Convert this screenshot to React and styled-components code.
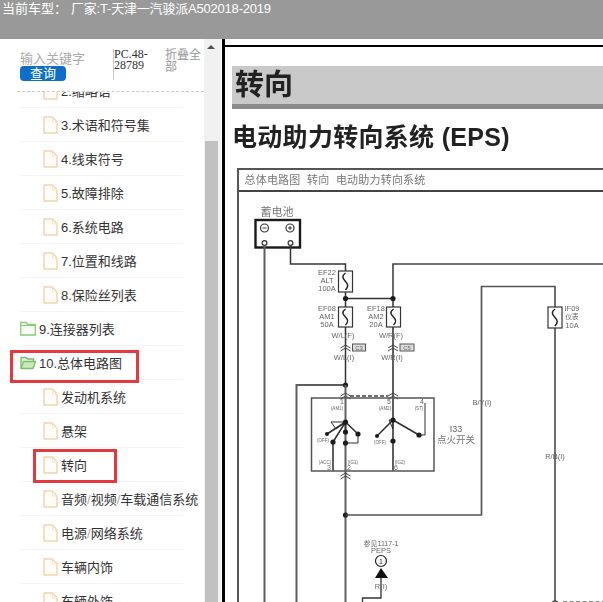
import React from "react";
import styled, { createGlobalStyle } from "styled-components";

const Global = createGlobalStyle`
  html, body { margin: 0; padding: 0; height: 100%; overflow: hidden; background: #fff; }
  #root { height: 100%; }
`;

const CJK = `"Liberation Sans", "Noto Sans CJK SC", sans-serif`;

const Page = styled.div`
  width: 603px;
  height: 602px;
  display: flex;
  flex-direction: column;
  overflow: hidden;
  font-family: ${CJK};
`;

const TopBar = styled.header`
  height: 39px;
  box-sizing: border-box;
  flex: none;
  background: #999;
  color: #fff;
  font-size: 13px;
  line-height: 15px;
  padding: 1px 2px 0;
  display: flex;
  white-space: pre;
`;

const CarModel = styled.span`
  margin-left: 4px;
  letter-spacing: -0.2px;
`;

const Body = styled.div`
  flex: 1;
  min-height: 0;
  display: flex;
`;

const Sidebar = styled.aside`
  width: 222px;
  flex: none;
  display: flex;
  background: #fff;
`;

const TreePane = styled.div`
  width: 204px;
  flex: none;
  display: flex;
  flex-direction: column;
  min-height: 0;
`;

const SearchHead = styled.div`
  height: 53px;
  box-sizing: border-box;
  flex: none;
  margin-left: 17px;
  padding: 10px 0 0 3px;
  border-bottom: 1px dashed #ccc;
  display: flex;
  align-items: flex-start;
  position: relative;
  z-index: 1;
  background: #fff;
`;

const SearchBox = styled.div`
  width: 93px;
  flex: none;
  display: flex;
  flex-direction: column;
  padding-top: 3px;
`;

const Placeholder = styled.div`
  font-size: 13px;
  line-height: 14px;
  color: #aaa;
`;

const QueryButton = styled.button`
  width: 46px;
  height: 15px;
  padding: 0;
  border: 0;
  border-radius: 4px;
  background: #0d6fc7;
  color: #fff;
  font: 13px/15px ${CJK};
`;

const CodeBox = styled.div`
  width: 36px;
  height: 31px;
  flex: none;
  border-left: 1px solid #ccc;
  font: 12px/11px "Liberation Serif", serif;
  color: #333;
  overflow-wrap: break-word;
`;

const CollapseAll = styled.div`
  width: 36px;
  flex: none;
  margin-left: 15px;
  font-size: 12px;
  line-height: 12px;
  color: #999;
`;

const TreeViewport = styled.div`
  flex: 1;
  min-height: 0;
  overflow: hidden;
`;

const TreeList = styled.ul`
  list-style: none;
  margin: -18px 0 0;
  padding: 0;
`;

const Row = styled.li`
  position: relative;
  height: 34px;
  box-sizing: border-box;
  margin: 0 21px 0 20px;
  padding-left: ${(p) => (p.$nested ? 23 : 0)}px;
  border-bottom: 1px solid #f4f4f4;
  display: flex;
  align-items: center;
  font-size: 13px;
  color: #333;
  white-space: nowrap;
`;

const Label = styled.span`
  margin-left: 3px;
`;

const Slash = styled.span`
  color: #aaa;
`;

const RedBox = styled.span`
  position: absolute;
  top: ${(p) => p.$top}px;
  left: ${(p) => p.$left}px;
  width: ${(p) => p.$width}px;
  height: ${(p) => p.$height}px;
  box-sizing: border-box;
  border: 3px solid #e3393f;
  pointer-events: none;
`;

const ScrollTrack = styled.div`
  width: 17px;
  flex: none;
  background: #f1f1f1;
  display: flex;
  flex-direction: column;
  align-items: flex-start;
`;

const ScrollArrow = styled.span`
  width: 0;
  height: 0;
  margin: 6px 0 0 3px;
  border-left: 4px solid transparent;
  border-right: 4px solid transparent;
  border-bottom: 4px solid #505050;
`;

const ScrollThumb = styled.span`
  flex: 1;
  width: 13px;
  margin: 92px 0 0 1px;
  background: #c1c1c1;
`;

const ViewerPane = styled.main`
  flex: 1;
  min-width: 0;
  border-left: 3px solid #000;
  padding-top: 6px;
  overflow: hidden;
  background: #fff;
`;

const PageSheet = styled.article`
  height: 100%;
  box-sizing: border-box;
  border-top: 2px solid #000;
  padding: 19px 0 0 7px;
  overflow: hidden;
  filter: blur(0.35px);
`;

const SectionBand = styled.h1`
  margin: 0;
  height: 38px;
  background: #c9c9c9;
  border-bottom: 5px solid #8a8a8a;
  padding-left: 3px;
  font: bold 29px/39px ${CJK};
  color: #222;
`;

const PageTitle = styled.h2`
  margin: 12px 0 15px 0;
  font: bold 25px/32px ${CJK};
  letter-spacing: 0.3px;
  color: #222;
  white-space: nowrap;
`;

const Frame = styled.section`
  margin-left: 4.5px;
  width: 420px;
  border: 2px solid #555;
  border-right: 0;
  border-bottom: 0;
  background: #fff;
`;

const FrameHeader = styled.div`
  height: 20px;
  border-bottom: 2px solid #444;
  padding-left: 6px;
  font-size: 11px;
  line-height: 20px;
  color: #777;
  white-space: pre;
  letter-spacing: 0.2px;
`;

const Diagram = styled.svg`
  display: block;
  width: 364px;
  height: 411px;
`;

const FileIcon = () => (
  <svg width="15" height="18" viewBox="0 0 15 18" style={{ flex: "none" }}>
    <path d="M1 1h8.5L14 6v11H1z" fill="#fffdf9" stroke="#f4d5ae" strokeWidth="1.5" strokeLinejoin="round" />
    <path d="M9.5 1v5H14" fill="none" stroke="#f8e4cb" strokeWidth="1" />
  </svg>
);

const FolderIcon = ({ open }) => (
  <svg width="16" height="15" viewBox="0 0 16 15" style={{ flex: "none" }}>
    {open ? (
      <>
        <path d="M1 13.5V2.5h5l1.5 1.5h6v2.5" fill="#e5f3df" stroke="#79bf68" strokeWidth="1.3" />
        <path d="M1 13.5l2.5-7H15.5l-2.5 7z" fill="#c9e8bb" stroke="#79bf68" strokeWidth="1.3" strokeLinejoin="round" />
      </>
    ) : (
      <>
        <path d="M.7 14V1.5h5.5L8 3.5h7.3V14z" fill="#f7fcf4" stroke="#8acb7a" strokeWidth="1.3" />
        <path d="M.7 4.5h14.6" stroke="#8acb7a" strokeWidth="1" />
      </>
    )}
  </svg>
);

const rows = [
  { text: "2.缩略语", nested: true },
  { text: "3.术语和符号集", nested: true },
  { text: "4.线束符号", nested: true },
  { text: "5.故障排除", nested: true },
  { text: "6.系统电路", nested: true },
  { text: "7.位置和线路", nested: true },
  { text: "8.保险丝列表", nested: true },
  { text: "9.连接器列表", folder: "closed" },
  { text: "10.总体电路图", folder: "open", mark: { top: 4, left: -10, width: 129, height: 33 } },
  { text: "发动机系统", nested: true },
  { text: "悬架", nested: true },
  { text: "转向", nested: true, mark: { top: 1, left: 13, width: 84, height: 34 } },
  { text: "音频/视频/车载通信系统", nested: true },
  { text: "电源/网络系统", nested: true },
  { text: "车辆内饰", nested: true },
  { text: "车辆外饰", nested: true },
];

const withSlashes = (text) =>
  text.split("/").flatMap((part, i) => (i === 0 ? [part] : [<Slash key={i}>/</Slash>, part]));

const W = "#5e5e5e";
const INK = "#2e2e2e";

const Wire = ({ d, color = W, width = 2, dash }) => (
  <path d={d} fill="none" stroke={color} strokeWidth={width} strokeDasharray={dash} />
);

const Dot = ({ x, y, r = 2.6 }) => <circle cx={x} cy={y} r={r} fill="#1c1c1c" />;

const T = ({ x, y, size = 7.5, color = "#666", children }) => (
  <text x={x} y={y} fontSize={size} fill={color} textAnchor="middle" fontFamily={CJK}>
    {children}
  </text>
);

const Fuse = ({ x, y, w = 14, h = 20 }) => (
  <g>
    <rect x={x} y={y} width={w} height={h} fill="#fff" stroke="#333" strokeWidth="1.2" />
    <path
      d={`M${x + w / 2} ${y + 2}c-4 3-3 5 0 ${h / 2 - 2}c3 3 3 5 0 ${h / 2 - 2}`}
      fill="none"
      stroke="#222"
      strokeWidth="1.5"
    />
  </g>
);

const Chevron = ({ x, y }) => (
  <path d={`M${x - 5} ${y + 1}l5-3 5 3M${x - 5} ${y + 4}l5-3 5 3`} fill="none" stroke="#444" strokeWidth="1" />
);

const Circuit = () => (
  <Diagram viewBox="239 191 364 411">
    <T x={277} y={215} size={11} color="#777">蓄电池</T>
    <rect x={255.5} y={219} width={44.5} height={27.5} fill="#fff" stroke="#1a1a1a" strokeWidth="2.4" />
    <circle cx={264.5} cy={227} r={4} fill="none" stroke="#333" strokeWidth="1.2" />
    <circle cx={290} cy={227} r={4} fill="none" stroke="#333" strokeWidth="1.2" />
    <path d="M262.5 227h4M288 227h4M290 225v4" stroke="#333" strokeWidth="1" />

    <Wire d="M264.5 245V602" />
    <Wire d="M290.5 245V263H345.5V384" color="#333" width={1.5} />
    <Wire d="M393 326V297.5M345.5 297.5H393" color="#333" width={1.5} />
    <Wire d="M393 297.5V263H603" color="#444" width={1.6} />
    <Wire d="M393 326V396" />
    <Wire d="M345.5 384H296.5V602" />
    <circle cx={264.5} cy={242} r={2.4} fill="#fff" stroke="#333" strokeWidth="1.2" />
    <circle cx={290.5} cy={242} r={2.4} fill="#fff" stroke="#333" strokeWidth="1.2" />
    <Dot x={345.5} y={297.5} />
    <Dot x={393} y={297.5} />
    <Dot x={345.5} y={384} />

    <Fuse x={338.5} y={270} h={21} />
    <Fuse x={338.5} y={306} />
    <Fuse x={386.5} y={306} />
    <T x={327} y={274}>EF22</T>
    <T x={327} y={282}>ALT</T>
    <T x={327} y={290}>100A</T>
    <T x={327} y={310}>EF08</T>
    <T x={327} y={318}>AM1</T>
    <T x={327} y={326}>50A</T>
    <T x={376} y={310}>EF18</T>
    <T x={376} y={318}>AM2</T>
    <T x={376} y={326}>20A</T>
    <T x={343} y={337}>W/L(F)</T>
    <T x={391} y={337}>W/R(F)</T>
    <T x={344} y={359}>W/L(I)</T>
    <T x={392} y={359}>W/R(I)</T>
    <Chevron x={345.5} y={346} />
    <Chevron x={393} y={346} />
    <rect x={352.5} y={343} width={13} height={7} fill="#ddd" stroke="#555" />
    <rect x={400} y={343} width={14} height={7} fill="#ddd" stroke="#555" />
    <T x={359} y={349} size={6}>C3</T>
    <T x={407} y={349} size={6}>C5</T>

    <Chevron x={345.5} y={394} />
    <Chevron x={393} y={394} />
    <Wire d="M350 395H388" color="#444" width={1.6} dash="4 2" />
    <rect x={311.5} y={397} width={122.5} height={73} fill="none" stroke="#555" strokeWidth="1.5" />
    <T x={342} y={403} size={7}>1</T>
    <T x={389} y={403} size={7}>5</T>
    <T x={422} y={403} size={7}>4</T>
    <T x={337} y={409} size={4.5}>(AM1)</T>
    <T x={385} y={409} size={4.5}>(AM2)</T>
    <T x={419} y={409} size={4.5}>(ST)</T>
    <T x={323} y={441} size={4.5}>(OFF)</T>
    <T x={380} y={443} size={4.5}>(OFF)</T>
    <T x={325} y={463} size={4.5}>(ACC)</T>
    <T x={353} y={463} size={4.5}>(IG1)</T>
    <T x={400} y={463} size={4.5}>(IG2)</T>
    <T x={329} y={469} size={7}>3</T>
    <T x={349} y={469} size={7}>2</T>
    <T x={396} y={469} size={7}>6</T>

    <Wire d="M345.5 384V602" />
    <Wire d="M393 396V470M333 441V470" />
    <Wire d="M345.5 421L327 433M345.5 421L333 441M345.5 421V431M345.5 421L358 433" color={INK} width={1.5} />
    <Wire d="M331 421H345.5L336 428L331 421" color={INK} width={1} />
    <Wire d="M345.5 442H358V433" color={INK} width={1} />
    <Dot x={345.5} y={421} />
    <Dot x={345.5} y={431} />
    <Dot x={345.5} y={442} />
    <Dot x={333} y={441} />
    <Dot x={327} y={433} r={2} />
    <Dot x={358} y={433} />
    <Wire d="M393 419L377 435M393 419L419 434" color={INK} width={1.5} />
    <Wire d="M389 419H393L393 428L389 419" color={INK} width={1} />
    <Wire d="M419 434H425V402" color={INK} width={1} />
    <Dot x={393} y={419} />
    <Dot x={393} y={440} />
    <Dot x={419} y={434} />
    <Dot x={377} y={435} r={2} />
    <T x={456} y={431} size={9}>I33</T>
    <T x={456} y={442} size={9.5} color="#777">点火开关</T>
    <Chevron x={345.5} y={474} />

    <Dot x={345.5} y={514} />
    <Wire d="M345.5 514H481.5V285.5H555V602" color="#555" width={1.7} />
    <Fuse x={548} y={306} h={21} />
    <T x={572} y={310}>IF09</T>
    <T x={572} y={318} size={6.5}>仪表</T>
    <T x={572} y={327}>10A</T>
    <T x={482} y={404}>B/Y(I)</T>
    <T x={555} y={458}>R/B(I)</T>
    <circle cx={555} cy={603} r={3} fill="#fff" stroke="#444" strokeWidth="1.4" />
    <Wire d="M563 601H603" color="#666" width={1.6} dash="4 2.5" />

    <T x={381} y={545} size={7}>参见1117-1</T>
    <T x={381} y={552}>PEPS</T>
    <circle cx={381} cy={560} r={5.5} fill="#fff" stroke="#222" strokeWidth="1.2" />
    <T x={381} y={563} size={7} color="#222">1</T>
    <path d="M381 567L388 577H375z" fill="#111" />
    <Wire d="M381 577V597H362.5V602" color="#333" width={1.3} />
    <T x={381} y={588}>R(I)</T>
  </Diagram>
);

export default function App() {
  return (
    <>
      <Global />
      <Page>
        <TopBar>
          <span>当前车型：</span>
          <CarModel>厂家:T-天津一汽骏派A502018-2019</CarModel>
        </TopBar>
        <Body>
          <Sidebar>
            <TreePane>
              <SearchHead>
                <SearchBox>
                  <Placeholder>输入关键字</Placeholder>
                  <QueryButton>查询</QueryButton>
                </SearchBox>
                <CodeBox>PC.48-28789</CodeBox>
                <CollapseAll>折叠全部</CollapseAll>
              </SearchHead>
              <TreeViewport>
                <TreeList>
                  {rows.map((r) => (
                    <Row key={r.text} $nested={r.nested}>
                      {r.folder ? <FolderIcon open={r.folder === "open"} /> : <FileIcon />}
                      <Label>{withSlashes(r.text)}</Label>
                      {r.mark && (
                        <RedBox $top={r.mark.top} $left={r.mark.left} $width={r.mark.width} $height={r.mark.height} />
                      )}
                    </Row>
                  ))}
                </TreeList>
              </TreeViewport>
            </TreePane>
            <ScrollTrack>
              <ScrollArrow />
              <ScrollThumb />
            </ScrollTrack>
          </Sidebar>
          <ViewerPane>
            <PageSheet>
              <SectionBand>转向</SectionBand>
              <PageTitle>电动助力转向系统 (EPS)</PageTitle>
              <Frame>
                <FrameHeader>总体电路图  转向  电动助力转向系统</FrameHeader>
                <Circuit />
              </Frame>
            </PageSheet>
          </ViewerPane>
        </Body>
      </Page>
    </>
  );
}
